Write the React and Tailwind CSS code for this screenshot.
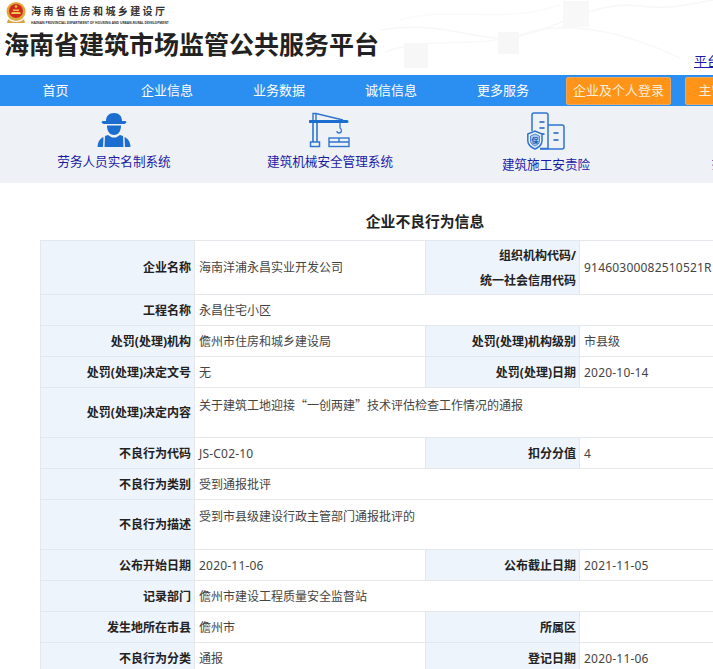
import React from 'react';

const cjk = { fontFamily: '"Noto Sans", "Noto Sans CJK SC", sans-serif' };

const navItems = ['首页', '企业信息', '业务数据', '诚信信息', '更多服务'];

const Quote = ({ children }) => <span style={{ fontFamily: '"Noto Sans CJK SC", sans-serif' }}>{children}</span>;

const rows = [
  { h: 'h-[54px]', a: '企业名称', b: '海南洋浦永昌实业开发公司', c: ['组织机构代码/', '统一社会信用代码'], d: '91460300082510521R', latinD: true },
  { h: 'h-[31px]', a: '工程名称', b: '永昌住宅小区', wide: true },
  { h: 'h-[31px]', a: '处罚(处理)机构', b: '儋州市住房和城乡建设局', c: ['处罚(处理)机构级别'], d: '市县级' },
  { h: 'h-[31px]', a: '处罚(处理)决定文号', b: '无', c: ['处罚(处理)日期'], d: '2020-10-14', latinD: true },
  {
    h: 'h-[50px]',
    a: '处罚(处理)决定内容',
    b: (
      <>
        关于建筑工地迎接<Quote>“</Quote>一创两建<Quote>”</Quote>技术评估检查工作情况的通报
      </>
    ),
    wide: true,
    top: true,
  },
  { h: 'h-[31px]', a: '不良行为代码', b: 'JS-C02-10', latinB: true, c: ['扣分分值'], d: '4' },
  { h: 'h-[31px]', a: '不良行为类别', b: '受到通报批评', wide: true },
  { h: 'h-[50px]', a: '不良行为描述', b: '受到市县级建设行政主管部门通报批评的', wide: true, top: true },
  { h: 'h-[31px]', a: '公布开始日期', b: '2020-11-06', latinB: true, c: ['公布截止日期'], d: '2021-11-05', latinD: true },
  { h: 'h-[31px]', a: '记录部门', b: '儋州市建设工程质量安全监督站', wide: true },
  { h: 'h-[31px]', a: '发生地所在市县', b: '儋州市', c: ['所属区'], d: '' },
  { h: 'h-[31px]', a: '不良行为分类', b: '通报', c: ['登记日期'], d: '2020-11-06', latinD: true },
];

const Emblem = () => (
  <svg width="20" height="24" viewBox="0 0 20 24" className="shrink-0">
    <path d="M2 18 C5 22 15 22 18 18 L19 22 L1 22 Z" fill="#d9a441" />
    <circle cx="10" cy="10.5" r="9.5" fill="#e0a83c" />
    <circle cx="10" cy="10" r="7" fill="#cf2a1c" />
    <path d="M5 13 H15 L14 11 H6 Z M7 10 H13 V8.5 H7 Z" fill="#f2c64d" />
    <circle cx="10" cy="5.5" r="1.3" fill="#f2c64d" />
  </svg>
);

const WorkerIcon = () => (
  <svg width="34" height="36" viewBox="0 0 34 36" fill="#1c6dd0">
    <path d="M9 9 C9 4 12 1 17 1 C22 1 25 4 25 9 H28 C29 9 30 10 29 11 C28 12 27 12 25 12 H9 C7 12 6 12 5 11 C4 10 5 9 6 9 Z" />
    <path d="M10 13.5 H24 C24 19 21.5 23 17 23 C12.5 23 10 19 10 13.5 Z" />
    <path d="M11 23 L15 25.5 H19 L23 23 L26 24 L26.5 35 H7.5 L8 24 Z" />
    <path d="M5.5 25.5 L6.5 25 L6 35 H0.5 C0.7 31 2 27.5 5.5 25.5 Z" />
    <path d="M28.5 25.5 L27.5 25 L28 35 H33.5 C33.3 31 32 27.5 28.5 25.5 Z" />
  </svg>
);

const CraneIcon = () => (
  <svg width="42" height="36" viewBox="0 0 42 36" fill="none" stroke="#2f74d0" strokeWidth="1.4">
    <path d="M4 9 V1.5 H7 L34 8" />
    <path d="M7 2 V9" />
    <path d="M1 9.5 H38" stroke="#1c6dd0" strokeWidth="3" strokeLinecap="round" />
    <path d="M4 11 V30 M8 11 V30" strokeWidth="1.6" />
    <rect x="1.5" y="30" width="9" height="4.5" strokeWidth="1.5" />
    <path d="M31 11 V16 C33 17 33 21 30 21 C28.5 21 28 20 28 19" strokeWidth="1.3" />
    <rect x="20" y="26" width="20" height="8.5" />
    <path d="M20 30 H40 M30 26 V30" />
  </svg>
);

const InsureIcon = () => (
  <svg width="38" height="38" viewBox="0 0 38 38" fill="none" stroke="#2f74d0" strokeWidth="1.5">
    <path d="M5 19 V3 C5 2 6 1 7 1 H19 C20 1 21 2 21 3 V36.5 H13" />
    <path d="M21 13 H35 C36 13 37 14 37 15 V35 C37 36 36 37 35 37 H13" />
    <path d="M13 10 H17 M13 16 H17 M13 22 H17 M27 21 H31 M27 28 H31" stroke="#1c5fb8" strokeLinecap="round" />
    <path d="M0.8 22 L8 19 L15 22 V29 C15 33 11 36 8 37 C5 36 0.8 33 0.8 29 Z" fill="#eef2f6" />
    <path d="M3.5 24 L8 22 L12.5 24 V29 C12.5 31.5 10 33.5 8 34 C6 33.5 3.5 31.5 3.5 29 Z" fill="#a9c8ee" strokeWidth="0.8" />
    <text x="8" y="31" textAnchor="middle" fontSize="7" fontWeight="700" fill="#1c5fb8" stroke="none">保</text>
  </svg>
);

const Pattern = () => (
  <svg className="absolute left-0 top-0" width="713" height="75" viewBox="0 0 713 75" fill="none">
    <path d="M380 30 C440 20 470 40 510 38 C560 30 590 0 640 6 C670 10 690 4 713 0" stroke="#f7f7f7" strokeWidth="1.5" />
    <path d="M385 52 C430 35 480 50 530 32 C570 22 620 30 680 58" stroke="#f8f8f8" strokeWidth="1.5" />
    <path d="M400 20 C450 5 500 25 560 5" stroke="#fafafa" strokeWidth="1.5" />
    <rect x="404" y="43" width="24" height="25" fill="#f7f7f7" />
    <rect x="498" y="32" width="21" height="22" fill="#f7f7f7" />
    <rect x="563" y="1" width="26" height="26" fill="#f8f8f8" />
  </svg>
);

const Label = ({ lines }) => (
  <td className="bg-[#eef4fc] border border-[#e4e7ec] text-right align-middle pr-[3px] pl-0 text-[12px] font-bold text-[#222] leading-[25px]">
    {lines.map((l) => (
      <div key={l}>{l}</div>
    ))}
  </td>
);

const Value = ({ text, wide, top, latin }) => (
  <td
    colSpan={wide ? 3 : 1}
    className={`border border-[#e4e7ec] pl-[4px] text-[12px] text-[#444] leading-[18px] ${top ? 'align-top pt-[8px]' : 'align-middle pt-[1px]'} ${latin ? 'tracking-[0.2px]' : ''}`}
  >
    {text}
  </td>
);

export default function App() {
  return (
    <div className="h-screen w-full overflow-hidden bg-white" style={cjk}>
      {/* top logo */}
      <div className="relative h-[75px] overflow-hidden">
        <Pattern />
        <div className="relative flex items-start pl-[6px] pt-[1px]">
          <Emblem />
          <div className="ml-[5px] mt-[3px]">
            <div className="text-[10px] font-bold leading-[14px] tracking-[2.4px] text-[#333] whitespace-nowrap">海南省住房和城乡建设厅</div>
            <div className="mt-[2px] text-[3.3px] font-bold leading-[5px] whitespace-nowrap text-[#333]">
              HAINAN PROVINCIAL DEPARTMENT OF HOUSING AND URBAN-RURAL DEVELOPMENT
            </div>
          </div>
        </div>
        <div className="relative pl-[4px] pt-[2px] text-[25px] font-bold leading-[34px] whitespace-nowrap text-[#222]">
          海南省建筑市场监管公共服务平台
        </div>
        <a className="absolute left-[694px] top-[53px] text-[13px] leading-[17px] underline whitespace-nowrap text-[#1a1aa6]">平台首页</a>
      </div>

      {/* nav */}
      <div className="flex h-[31px] items-center bg-[#2b8ff1] text-[13px] text-white whitespace-nowrap">
        {navItems.map((n, i) => (
          <div key={n} className={`shrink-0 text-center ${i === 0 ? 'w-[111px]' : 'w-[112px]'}`}>{n}</div>
        ))}
        <div className="ml-[7px] flex h-[28px] w-[105px] shrink-0 items-center justify-center rounded-[2px] border border-[#f0a860] bg-[#ff9419] text-[#fdeeda]">
          企业及个人登录
        </div>
        <div className="ml-[14px] flex h-[28px] w-[105px] shrink-0 items-center justify-center rounded-[2px] border border-[#f0a860] bg-[#ff9419] text-[#fdeeda]">
          主管部门登录
        </div>
      </div>

      {/* systems */}
      <div className="flex h-[77px] bg-[#eef2f6] pl-[6px] whitespace-nowrap text-[12.6px] text-[#1a1aa6]">
        <div className="flex w-[216px] shrink-0 flex-col items-center pt-[6px]">
          <WorkerIcon />
          <div className="mt-[5px] leading-[17px]">劳务人员实名制系统</div>
        </div>
        <div className="flex w-[216px] shrink-0 flex-col items-center pt-[6px]">
          <CraneIcon />
          <div className="mt-[5px] leading-[17px]">建筑机械安全管理系统</div>
        </div>
        <div className="flex w-[216px] shrink-0 flex-col items-center pt-[6px]">
          <InsureIcon />
          <div className="mt-[6px] leading-[17px]">建筑施工安责险</div>
        </div>
        <div className="flex w-[216px] shrink-0 flex-col items-center pt-[49px]">
          <div className="leading-[17px]">扬尘噪声监测系统</div>
        </div>
      </div>

      {/* title */}
      <div className="w-[850px] pt-[28px] text-center text-[14.8px] font-bold leading-[20px] text-[#222]">企业不良行为信息</div>

      {/* table */}
      <table className="ml-[40px] mt-[9px] w-[771px] table-fixed border-collapse">
        <colgroup>
          <col className="w-[154px]" />
          <col className="w-[231px]" />
          <col className="w-[154px]" />
          <col className="w-[232px]" />
        </colgroup>
        <tbody>
          {rows.map((r) => (
            <tr key={r.a} className={r.h}>
              <Label lines={[r.a]} />
              <Value text={r.b} wide={r.wide} top={r.top} latin={r.latinB} />
              {!r.wide && <Label lines={r.c} />}
              {!r.wide && <Value text={r.d} latin={r.latinD} />}
            </tr>
          ))}
        </tbody>
      </table>
    </div>
  );
}
